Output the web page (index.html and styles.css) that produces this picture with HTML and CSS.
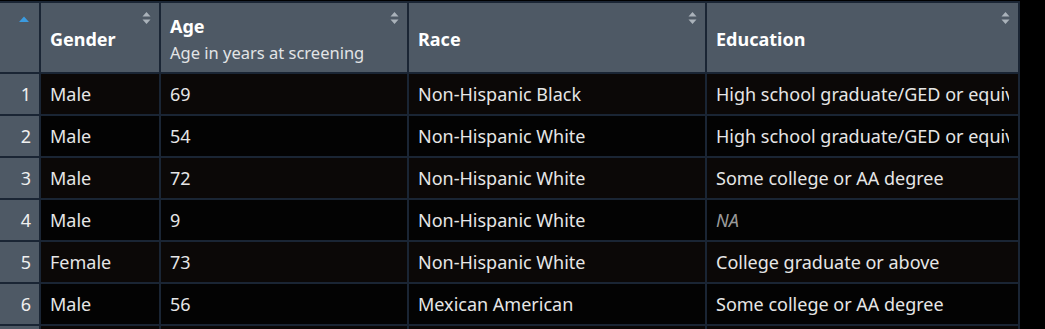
FILE: index.html
```html
<!DOCTYPE html>
<html>
<head>
<meta charset="utf-8">
<link rel="stylesheet" href="styles.css">
</head>
<body>
<table class="grid">
  <colgroup>
    <col class="c-idx"><col class="c-gender"><col class="c-age"><col class="c-race"><col class="c-edu">
  </colgroup>
  <thead>
    <tr>
      <th class="idx-head"><svg class="sort-active" width="12" height="8" viewBox="0 0 12 8"><path d="M1 7 L6 1.5 L11 7 Z" fill="#3b9be0"/></svg></th>
      <th><span class="title">Gender</span><svg class="sort" width="9" height="14" viewBox="0 0 9 14"><path d="M0.5 5.5 L4.5 1 L8.5 5.5 Z M0.5 8.5 L4.5 13 L8.5 8.5 Z" fill="#aab2ba"/></svg></th>
      <th><span class="title">Age</span><span class="sub">Age in years at screening</span><svg class="sort" width="9" height="14" viewBox="0 0 9 14"><path d="M0.5 5.5 L4.5 1 L8.5 5.5 Z M0.5 8.5 L4.5 13 L8.5 8.5 Z" fill="#aab2ba"/></svg></th>
      <th><span class="title">Race</span><svg class="sort" width="9" height="14" viewBox="0 0 9 14"><path d="M0.5 5.5 L4.5 1 L8.5 5.5 Z M0.5 8.5 L4.5 13 L8.5 8.5 Z" fill="#aab2ba"/></svg></th>
      <th><span class="title">Education</span><svg class="sort" width="9" height="14" viewBox="0 0 9 14"><path d="M0.5 5.5 L4.5 1 L8.5 5.5 Z M0.5 8.5 L4.5 13 L8.5 8.5 Z" fill="#aab2ba"/></svg></th>
    </tr>
  </thead>
  <tbody>
    <tr class="odd"><td class="idx">1</td><td>Male</td><td>69</td><td>Non-Hispanic Black</td><td><div class="clip">High school graduate/GED or equivalent</div></td></tr>
    <tr><td class="idx">2</td><td>Male</td><td>54</td><td>Non-Hispanic White</td><td><div class="clip">High school graduate/GED or equivalent</div></td></tr>
    <tr class="odd"><td class="idx">3</td><td>Male</td><td>72</td><td>Non-Hispanic White</td><td><div class="clip">Some college or AA degree</div></td></tr>
    <tr><td class="idx">4</td><td>Male</td><td>9</td><td>Non-Hispanic White</td><td><div class="clip na">NA</div></td></tr>
    <tr class="odd"><td class="idx">5</td><td>Female</td><td>73</td><td>Non-Hispanic White</td><td><div class="clip">College graduate or above</div></td></tr>
    <tr><td class="idx">6</td><td>Male</td><td>56</td><td>Mexican American</td><td><div class="clip">Some college or AA degree</div></td></tr>
    <tr class="odd tail"><td class="idx"></td><td></td><td></td><td></td><td></td></tr>
  </tbody>
</table>
</body>
</html>
```
FILE: styles.css
```css
html, body {
  margin: 0;
  padding: 0;
  background: #000000;
  overflow: hidden;
}
body {
  font-family: "Noto Sans", "Open Sans", sans-serif;
  font-size: 18px;
  color: #e6e6e6;
}
.grid {
  table-layout: fixed;
  border-collapse: separate;
  border-spacing: 2px;
  background: #1a2534;
  margin: 1px 0 0 -2px;
  width: 1022px;
}
.c-idx { width: 39px; }
.c-gender { width: 118px; }
.c-age { width: 246px; }
.c-race { width: 296px; }
.c-edu { width: 311px; }
th {
  position: relative;
  background: #4e5965;
  height: 69px;
  padding: 0 9px;
  text-align: left;
  vertical-align: middle;
  box-sizing: border-box;
}
.title {
  display: block;
  font-weight: 700;
  font-size: 18px;
  color: #ffffff;
  line-height: 24px;
  margin-top: 2px;
}
.sub {
  display: block;
  font-weight: 400;
  font-size: 16.5px;
  color: #e2e4e6;
  line-height: 22px;
  margin-top: 4px;
}
.sort {
  position: absolute;
  right: 8px;
  top: 8px;
}
.sort-active {
  position: absolute;
  left: 18px;
  top: 12px;
}
td {
  height: 40px;
  padding: 0 9px;
  box-sizing: border-box;
  background: #030303;
  white-space: nowrap;
  vertical-align: middle;
  line-height: 22px;
}
tr.odd td {
  background: #0b0807;
}
td.idx, tr.odd td.idx {
  background: #4e5965;
  text-align: right;
  padding: 0 8px 0 0;
  color: #f0f0f0;
}
.clip {
  overflow: hidden;
  white-space: nowrap;
}
.na {
  font-style: italic;
  color: #9a9a9a;
}
```
